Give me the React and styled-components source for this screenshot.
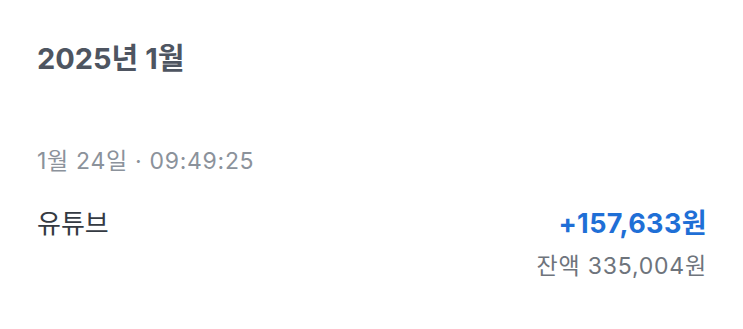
import React from 'react';
import styled, { createGlobalStyle } from 'styled-components';

const GlobalStyle = createGlobalStyle`
  html, body {
    margin: 0;
    padding: 0;
    background: #ffffff;
  }
  body {
    font-family: Inter, "Noto Sans CJK KR", sans-serif;
    -webkit-font-smoothing: antialiased;
  }
`;

const Page = styled.div`
  width: 743px;
  height: 329px;
  box-sizing: border-box;
  padding: 31px 36px 0 37px;
  background: #fff;
`;

const MonthTitle = styled.h2`
  margin: 0;
  font-size: 29px;
  line-height: 56px;
  font-weight: 700;
  color: #4e5561;
`;

const Entry = styled.div`
  margin-top: 59px;
  display: flex;
  flex-direction: column;
`;

const EntryDate = styled.div`
  font-size: 23px;
  line-height: 30px;
  letter-spacing: 0.7px;
  color: #8b929b;
`;

const EntryRow = styled.div`
  margin-top: 31px;
  display: flex;
  justify-content: space-between;
  align-items: flex-start;
`;

const Merchant = styled.div`
  font-size: 26px;
  line-height: 34px;
  color: #343a42;
`;

const Amounts = styled.div`
  display: flex;
  flex-direction: column;
  align-items: flex-end;
`;

const Amount = styled.div`
  font-size: 27px;
  line-height: 34px;
  font-weight: 700;
  letter-spacing: 0.4px;
  color: ${p => (p.$positive ? '#1f6fd6' : '#343a42')};
`;

const Balance = styled.div`
  margin-top: 10px;
  font-size: 23px;
  line-height: 30px;
  letter-spacing: 0.8px;
  color: #6e747c;
`;

export default function App() {
  return (
    <Page>
      <GlobalStyle />
      <MonthTitle>2025년 1월</MonthTitle>
      <Entry>
        <EntryDate>1월 24일 · 09:49:25</EntryDate>
        <EntryRow>
          <Merchant>유튜브</Merchant>
          <Amounts>
            <Amount $positive>+157,633원</Amount>
            <Balance>잔액 335,004원</Balance>
          </Amounts>
        </EntryRow>
      </Entry>
    </Page>
  );
}
